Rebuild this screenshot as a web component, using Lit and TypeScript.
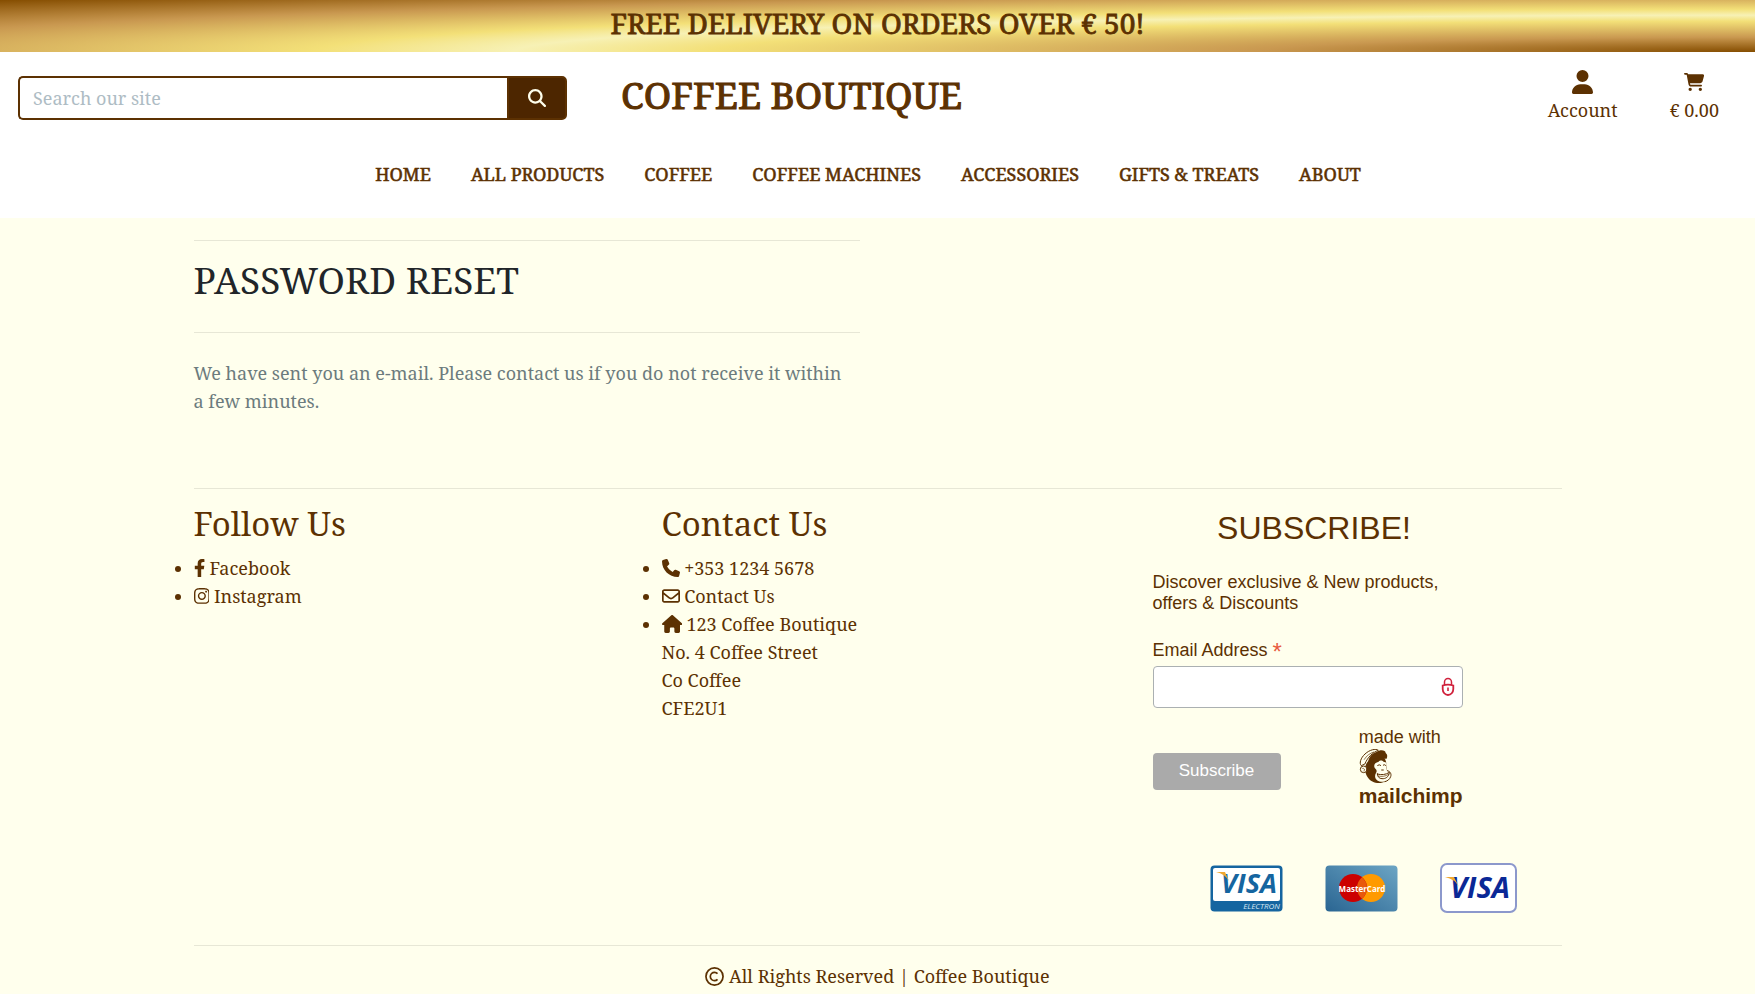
import { LitElement, html, css, svg } from "lit";
import { customElement, property } from "lit/decorators.js";

const ICONS: Record<string, { w: number; d: string }> = {
  search: { w: 512, d: "M416 208c0 45.9-14.9 88.3-40 122.7L502.6 457.4c12.5 12.5 12.5 32.8 0 45.3s-32.8 12.5-45.3 0L330.7 376c-34.4 25.2-76.8 40-122.7 40C93.1 416 0 322.9 0 208S93.1 0 208 0S416 93.1 416 208zM208 352a144 144 0 1 0 0-288 144 144 0 1 0 0 288z" },
  user: { w: 448, d: "M224 256A128 128 0 1 0 224 0a128 128 0 1 0 0 256zm-45.7 48C79.8 304 0 383.8 0 482.3C0 498.7 13.3 512 29.7 512H418.3c16.4 0 29.7-13.3 29.7-29.7C448 383.8 368.2 304 269.7 304H178.3z" },
  cart: { w: 576, d: "M0 24C0 10.7 10.7 0 24 0H69.5c22 0 41.5 12.8 50.6 32h411c26.3 0 45.5 25 38.6 50.4l-41 152.3c-8.5 31.4-37 53.3-69.5 53.3H170.7l5.4 28.5c2.2 11.3 12.1 19.5 23.6 19.5H488c13.3 0 24 10.7 24 24s-10.7 24-24 24H199.7c-34.6 0-64.3-24.6-70.7-58.5L77.4 54.5c-.7-3.8-4-6.5-7.9-6.5H24C10.7 48 0 37.3 0 24zM128 464a48 48 0 1 1 96 0 48 48 0 1 1 -96 0zm336-48a48 48 0 1 1 0 96 48 48 0 1 1 0-96z" },
  facebook: { w: 320, d: "M279.14 288l14.22-92.66h-88.91v-60.13c0-25.35 12.42-50.06 52.24-50.06h40.42V6.26S260.43 0 225.36 0c-73.22 0-121.08 44.38-121.08 124.72v70.62H22.89V288h81.39v224h100.17V288z" },
  instagram: { w: 448, d: "M224.1 141c-63.6 0-114.9 51.3-114.9 114.9s51.3 114.9 114.9 114.9S339 319.5 339 255.9 287.7 141 224.1 141zm0 189.6c-41.1 0-74.7-33.5-74.7-74.7s33.5-74.7 74.7-74.7 74.7 33.5 74.7 74.7-33.6 74.7-74.7 74.7zm146.4-194.3c0 14.9-12 26.8-26.8 26.8-14.9 0-26.8-12-26.8-26.8s12-26.8 26.8-26.8 26.8 12 26.8 26.8zm76.1 27.2c-1.7-35.9-9.9-67.7-36.2-93.9-26.2-26.2-58-34.4-93.9-36.2-37-2.1-147.9-2.1-184.9 0-35.8 1.7-67.6 9.9-93.9 36.1s-34.4 58-36.2 93.9c-2.1 37-2.1 147.9 0 184.9 1.7 35.9 9.9 67.7 36.2 93.9s58 34.4 93.9 36.2c37 2.1 147.9 2.1 184.9 0 35.9-1.7 67.7-9.9 93.9-36.2 26.2-26.2 34.4-58 36.2-93.9 2.1-37 2.1-147.8 0-184.8zM398.8 388c-7.8 19.6-22.9 34.7-42.6 42.6-29.5 11.7-99.5 9-132.1 9s-102.7 2.6-132.1-9c-19.6-7.8-34.7-22.9-42.6-42.6-11.7-29.5-9-99.5-9-132.1s-2.6-102.7 9-132.1c7.8-19.6 22.9-34.7 42.6-42.6 29.5-11.7 99.5-9 132.1-9s102.7-2.6 132.1 9c19.6 7.8 34.7 22.9 42.6 42.6 11.7 29.5 9 99.5 9 132.1s2.7 102.7-9 132.1z" },
  phone: { w: 512, d: "M164.9 24.6c-7.7-18.6-28-28.5-47.4-23.2l-88 24C12.1 30.2 0 46 0 64C0 311.4 200.6 512 448 512c18 0 33.8-12.1 38.6-29.5l24-88c5.3-19.4-4.6-39.7-23.2-47.4l-96-40c-16.3-6.8-35.2-2.1-46.3 11.6L304.7 368C234.3 334.7 177.3 277.7 144 207.3L193.3 167c13.7-11.2 18.4-30 11.6-46.3l-40-96z" },
  envelope: { w: 512, d: "M64 112c-8.8 0-16 7.2-16 16v22.1L220.5 291.7c20.7 17 50.4 17 71.1 0L464 150.1V128c0-8.8-7.2-16-16-16H64zM48 212.2V384c0 8.8 7.2 16 16 16H448c8.8 0 16-7.2 16-16V212.2L322 328.8c-38.4 31.5-93.7 31.5-132 0L48 212.2zM0 128C0 92.7 28.7 64 64 64H448c35.3 0 64 28.7 64 64V384c0 35.3-28.7 64-64 64H64c-35.3 0-64-28.7-64-64V128z" },
  house: { w: 576, d: "M575.8 255.5c0 18-15 32.1-32 32.1h-32l.7 160.2c0 2.7-.2 5.4-.5 8.1V472c0 22.1-17.9 40-40 40H456c-1.1 0-2.2 0-3.3-.1c-1.4 .1-2.8 .1-4.2 .1H416 392c-22.1 0-40-17.9-40-40V448 384c0-17.7-14.3-32-32-32H256c-17.7 0-32 14.3-32 32v64 24c0 22.1-17.9 40-40 40H160 128.1c-1.5 0-3-.1-4.5-.2c-1.2 .1-2.4 .2-3.6 .2H104c-22.1 0-40-17.9-40-40V360c0-.9 0-1.9 .1-2.8V287.6H32c-18 0-32-14-32-32.1c0-9 3-17 10-24L266.4 8c7-7 15-8 22-8s15 2 21 7L564.8 231.5c8 7 12 15 11 24z" },
};

@customElement("app-icon")
export class AppIcon extends LitElement {
  @property() name = "";

  static styles = css`
    :host { display: inline-block; height: 18px; line-height: 0; vertical-align: -2px; }
    .glyph { height: 100%; fill: currentColor; }
  `;

  render() {
    const icon = ICONS[this.name];
    return html`<svg class="glyph" viewBox="0 0 ${icon.w} 512" aria-hidden="true">${svg`<path d=${icon.d}></path>`}</svg>`;
  }
}

@customElement("app-root")
export class AppRoot extends LitElement {
  static styles = css`
    :host {
      --brown: #5c3102;
      --serif: "Noto Serif", "Droid Serif", "DejaVu Serif", serif;
      --sans: "Liberation Sans", Arial, sans-serif;
      display: block;
      min-height: 100vh;
      background: #ffffed;
      color: var(--brown);
      font: 18px/28px var(--serif);
    }
    * { box-sizing: border-box; }
    h1, h2, p, ul { margin: 0; padding: 0; font-weight: 400; }
    a { color: inherit; text-decoration: none; }
    hr { margin: 0; border: 0; border-top: 1px solid #e7e7d6; }
    .banner, .brand, .nav-link { -webkit-text-stroke: 0.03em var(--brown); }

    .banner {
      padding: 3px 0 9px;
      text-align: center;
      font-size: 28px;
      line-height: 40px;
      background: radial-gradient(ellipse farthest-corner at right bottom,
        #854d00 0%, #c99850 20%, #f3e078 42%, #f7f1b5 50%, #f3e078 58%, #c99850 78%, #854d00 100%);
    }

    .header { background: #fff; padding: 16px 18px 30px; }
    .top { display: grid; grid-template-columns: repeat(3, 1fr); gap: 36px; }
    .search { display: flex; height: 44px; margin-top: 8px; }
    .search-input {
      flex: 1;
      min-width: 0;
      padding: 0 13px;
      border: 2px solid var(--brown);
      border-right: 0;
      border-radius: 5px 0 0 5px;
      background: #fff;
      color: var(--brown);
      font: inherit;
      outline: none;
    }
    .search-input::placeholder { color: #aebcc4; opacity: 1; }
    .search-btn {
      width: 60px;
      padding: 0;
      border: 2px solid var(--brown);
      border-radius: 0 5px 5px 0;
      background: #4d2600;
      color: #ffffed;
    }
    .brand { padding-left: 18px; font-size: 37px; line-height: 54px; }
    .actions { display: flex; justify-content: flex-end; gap: 52px; padding-right: 18px; }
    .action { display: flex; flex-direction: column; align-items: center; }
    .action-icon { display: flex; align-items: center; height: 28px; }
    .user { height: 24px; }
    .nav { display: flex; justify-content: center; gap: 40px; padding: 36px 19px 0 0; }

    .container { width: 80%; margin: 0 auto; padding: 22px 18px 0; }
    .reset { width: calc(50% - 18px); }
    .title { padding: 16px 0 30px; color: #212529; font-size: 37px; line-height: 45px; }
    .note { padding: 26px 18px 0 0; color: #6c7b7d; }

    .footer { margin-top: 73px; }
    .columns { display: grid; grid-template-columns: repeat(3, 1fr); gap: 36px; padding: 15px 0 32px; }
    .heading { font-size: 33px; line-height: 40px; padding: 0 0 10px; }
    .form { width: 346px; padding: 4px 0 0 23px; font-family: var(--sans); line-height: 21px; }
    .form-title { font-size: 32px; line-height: 40px; text-align: center; margin-bottom: 24px; }
    .form-text { margin-bottom: 26px; }
    .form-label { display: block; margin-bottom: 5px; }
    .star { color: #e85c41; font-size: 24px; line-height: 1px; vertical-align: -4px; }
    .field { display: flex; align-items: center; width: 96%; height: 42px; border: 1px solid #abb0b2; border-radius: 4px; background: #fff; }
    .field-input { flex: 1; min-width: 0; height: 40px; padding: 0 9px; border: 0; background: none; font: inherit; outline: none; }
    .lock { width: 14px; height: 20px; margin-right: 7px; }
    .submit { display: flex; align-items: center; justify-content: space-between; width: 96%; margin-top: 19px; }
    .submit-btn { height: 37px; width: 128px; border: 0; border-radius: 4px; background: #aaa; color: #fff; font: 17px var(--sans); }
    .chimp { display: flex; flex-direction: column; padding-bottom: 8px; }
    .chimp-logo { width: 33px; height: 35px; margin: 1px 0; }
    .chimp-name { font-weight: 700; font-size: 21px; line-height: 22px; }
    .cards { display: flex; justify-content: flex-end; align-items: center; gap: 42px; padding: 48px 45px 0 0; }
    .card { height: 47px; width: 73px; }
    .card-wide { height: 50px; width: 77px; }
    .legal { padding-top: 16px; text-align: center; line-height: 28px; }
    .copy { width: 19px; height: 19px; vertical-align: -3px; }
  `;

  private links = ["HOME", "ALL PRODUCTS", "COFFEE", "COFFEE MACHINES", "ACCESSORIES", "GIFTS & TREATS", "ABOUT"];

  private header() {
    return html`
      <header>
        <div class="banner">FREE DELIVERY ON ORDERS OVER € 50!</div>
        <div class="header">
          <div class="top">
            <form class="search" @submit=${(e: Event) => e.preventDefault()}>
              <input class="search-input" type="search" aria-label="Search our site" placeholder="Search our site" />
              <button class="search-btn" aria-label="Search"><app-icon name="search"></app-icon></button>
            </form>
            <a class="brand" href="#">COFFEE BOUTIQUE</a>
            <div class="actions">
              <a class="action" href="#"><span class="action-icon"><app-icon class="user" name="user"></app-icon></span>Account</a>
              <a class="action" href="#"><span class="action-icon"><app-icon name="cart"></app-icon></span>€ 0.00</a>
            </div>
          </div>
          <nav class="nav">${this.links.map((l) => html`<a class="nav-link" href="#">${l}</a>`)}</nav>
        </div>
      </header>`;
  }

  private chimp() {
    return html`<svg class="chimp-logo" viewBox="18 13 99 105" stroke-linecap="round" aria-hidden="true">
      <path d="M38 62C46 42 62 34 92 36c6 8 8 16 8 24 1 10 0 14 4 22 8 6 4 20-6 28-16 10-44 6-54-12-4-8-10-14-6-36z" fill="#5c3102"></path>
      <path d="M24 62c-6-6-1-22 12-34 14-13 32-17 40-11-16 6-32 20-40 40z" fill="#ffffed" stroke="#5c3102" stroke-width="3"></path>
      <path d="M70 22c12-8 28-6 28 3 6 4 6 12 2 18-16-7-38-4-54 8 0-12 12-25 24-29z" fill="#5c3102"></path>
      <path d="M34 44c6-10 16-18 28-22" fill="none" stroke="#5c3102" stroke-width="2"></path>
      <path d="M76 52c6-7 14-4 16 0 8-2 10 6 8 12 0 6 0 10 3 14 9 2 13 10 10 18-5 12-18 17-30 15-14-2-21-14-14-26 4-6 1-10-3-14-6-8 0-18 10-19z" fill="#ffffed"></path>
      <circle cx="32" cy="74" r="10" fill="#ffffed" stroke="#5c3102" stroke-width="3"></circle>
      <path d="M29 71c6-1 7 4 4 8" fill="none" stroke="#5c3102" stroke-width="2"></path>
      <path d="M74 62q5-4 9 0M91 61q4-3 7 1M86 76h5" fill="none" stroke="#5c3102" stroke-width="3"></path>
      <path d="M73 88c12 4 26 2 36-5-1 14-12 20-22 19-8 0-14-6-14-14z" fill="none" stroke="#5c3102" stroke-width="3"></path>
      <path d="M76 94c10 3 22 1 31-5" fill="none" stroke="#5c3102" stroke-width="2"></path>
      <path d="M103 78c9 2 13 10 10 18-3 8-9 13-17 15" fill="none" stroke="#5c3102" stroke-width="3"></path>
    </svg>`;
  }

  private lock() {
    return html`<svg class="lock" viewBox="0 0 14 20" fill="none" stroke="#d0213c" aria-hidden="true">
      <path d="M3.500 8V5a3.500 3.500 0 0 1 7 0v3" stroke-width="1.500"></path>
      <path d="M1.700 8.500q5.300-1.800 10.600 0v3.500a5.300 6 0 0 1-10.600 0z" stroke-width="1.800"></path>
      <path d="M7 10.500v3.500" stroke-width="1.600"></path>
    </svg>`;
  }

  private cards() {
    return html`
      <div class="cards">
        <svg class="card" viewBox="0 0 73 47" role="img" aria-label="Visa Electron">
          <rect x=".5" y=".5" width="72" height="46" rx="4" fill="#1565a0"></rect>
          <rect x="3" y="3" width="67" height="33" rx="2" fill="#fff"></rect>
          <text x="39" y="28" text-anchor="middle" font-family="Open Sans, sans-serif" font-weight="700" font-style="italic" font-size="27" fill="#1565a0">VISA</text>
          <path d="M6 7h9l4 9q-4-7-13-9z" fill="#f0a830"></path>
          <text x="70" y="44" text-anchor="end" font-family="Open Sans, sans-serif" font-style="italic" font-size="8" fill="#d5e6f2">ELECTRON</text>
        </svg>
        <svg class="card" viewBox="0 0 73 47" role="img" aria-label="MasterCard">
          <defs><linearGradient id="mc" x1="0" y1="1" x2="1" y2="0"><stop offset="0" stop-color="#2a6592"></stop><stop offset="1" stop-color="#6ca5c4"></stop></linearGradient></defs>
          <rect x=".5" y=".5" width="72" height="46" rx="4" fill="url(#mc)"></rect>
          <circle cx="46" cy="23" r="14" fill="#ff9a00"></circle>
          <circle cx="28" cy="23" r="14" fill="#c00"></circle>
          <path d="M37 12.300a14 14 0 0 1 0 21.400a14 14 0 0 1 0-21.400z" fill="#e8590c"></path>
          <text x="37" y="27" text-anchor="middle" font-family="Open Sans, sans-serif" font-weight="700" font-size="8" fill="#fff">MasterCard</text>
        </svg>
        <svg class="card-wide" viewBox="0 0 77 50" role="img" aria-label="Visa">
          <rect x="1" y="1" width="75" height="48" rx="6" fill="#fff" stroke="#8c98cc" stroke-width="2"></rect>
          <text x="40" y="35" text-anchor="middle" font-family="Open Sans, sans-serif" font-weight="700" font-style="italic" font-size="29" fill="#0a2896">VISA</text>
          <path d="M5 14h9l5 10q-4-8-14-10z" fill="#f0a830"></path>
        </svg>
      </div>`;
  }

  render() {
    return html`
      ${this.header()}
      <div class="container">
        <main class="reset">
          <hr />
          <h1 class="title">PASSWORD RESET</h1>
          <hr />
          <p class="note">We have sent you an e-mail. Please contact us if you do not receive it within a few minutes.</p>
        </main>
        <footer class="footer">
          <hr />
          <div class="columns">
            <section>
              <h2 class="heading">Follow Us</h2>
              <ul>
                <li><a href="#"><app-icon name="facebook"></app-icon> Facebook</a></li>
                <li><a href="#"><app-icon name="instagram"></app-icon> Instagram</a></li>
              </ul>
            </section>
            <section>
              <h2 class="heading">Contact Us</h2>
              <ul>
                <li><app-icon name="phone"></app-icon> +353 1234 5678</li>
                <li><a href="#"><app-icon name="envelope"></app-icon> Contact Us</a></li>
                <li><app-icon name="house"></app-icon> 123 Coffee Boutique<br />No. 4 Coffee Street<br />Co Coffee<br />CFE2U1</li>
              </ul>
            </section>
            <section>
              <form class="form" @submit=${(e: Event) => e.preventDefault()}>
                <h2 class="form-title">SUBSCRIBE!</h2>
                <p class="form-text">Discover exclusive &amp; New products, offers &amp; Discounts</p>
                <label class="form-label" for="email">Email Address <span class="star">*</span></label>
                <div class="field"><input class="field-input" id="email" type="email" />${this.lock()}</div>
                <div class="submit">
                  <button class="submit-btn">Subscribe</button>
                  <a class="chimp" href="#">made with ${this.chimp()}<span class="chimp-name">mailchimp</span></a>
                </div>
              </form>
              ${this.cards()}
            </section>
          </div>
          <hr />
          <p class="legal">
            <svg class="copy" viewBox="0 0 20 20" fill="none" stroke="currentColor" stroke-width="1.800" aria-hidden="true">
              <circle cx="10" cy="10" r="9"></circle>
              <path d="M13.200 7a4.400 4.400 0 1 0 0 6"></path>
            </svg>
            All Rights Reserved | Coffee Boutique
          </p>
        </footer>
      </div>`;
  }
}
